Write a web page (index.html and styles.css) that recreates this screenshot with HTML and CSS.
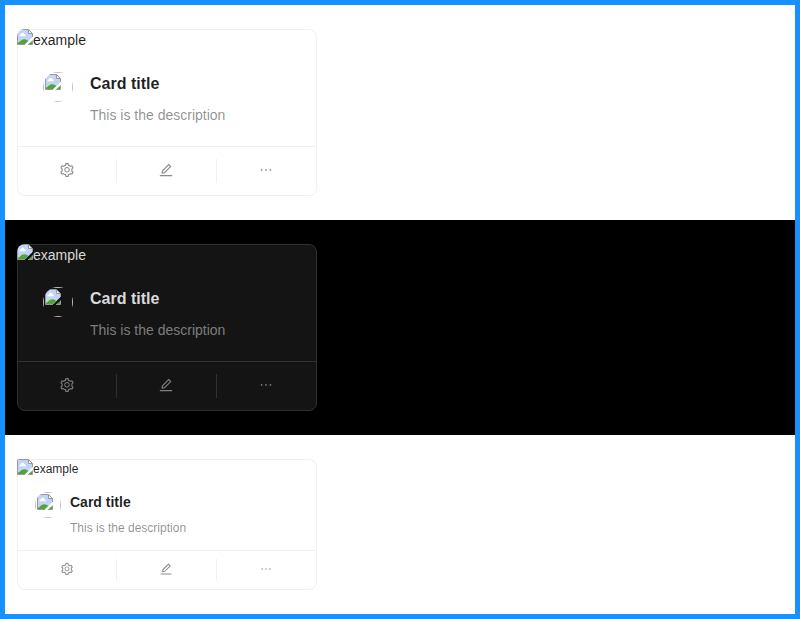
FILE: index.html
```
<!DOCTYPE html>
<html lang="en">
<head>
<meta charset="utf-8">
<title>Card</title>
<link rel="stylesheet" href="styles.css">
</head>
<body>
<svg class="sprite" aria-hidden="true">
  <symbol id="setting" viewBox="0 0 1024 1024"><path d="M924.8 625.7l-65.5-56c3.1-19 4.7-38.4 4.7-57.8s-1.6-38.8-4.7-57.8l65.5-56a32.03 32.03 0 009.3-35.2l-.9-2.6a443.74 443.74 0 00-79.7-137.9l-1.8-2.1a32.12 32.12 0 00-35.1-9.5l-81.3 28.9c-30-24.6-63.5-44-99.7-57.6l-15.7-85a32.05 32.05 0 00-25.8-25.7l-2.7-.5c-52.1-9.4-106.9-9.4-159 0l-2.7.5a32.05 32.05 0 00-25.8 25.7l-15.8 85.4a351.86 351.86 0 00-99 57.4l-81.9-29.1a32 32 0 00-35.1 9.5l-1.8 2.1a446.02 446.02 0 00-79.7 137.9l-.9 2.6c-4.5 12.5-.8 26.5 9.3 35.2l66.3 56.6c-3.1 18.8-4.6 38-4.6 57.1 0 19.2 1.5 38.4 4.6 57.1L99 625.5a32.03 32.03 0 00-9.3 35.2l.9 2.6c18.1 50.4 44.9 96.9 79.7 137.9l1.8 2.1a32.12 32.12 0 0035.1 9.5l81.9-29.1c29.8 24.5 63.1 43.9 99 57.4l15.8 85.4a32.05 32.05 0 0025.8 25.7l2.7.5a449.4 449.4 0 00159 0l2.7-.5a32.05 32.05 0 0025.8-25.7l15.7-85a350 350 0 0099.7-57.6l81.3 28.9a32 32 0 0035.1-9.5l1.8-2.1c34.8-41.1 61.6-87.5 79.7-137.9l.9-2.6c4.5-12.3.8-26.3-9.3-35zM788.3 465.9c2.5 15.1 3.8 30.6 3.8 46.1s-1.3 31-3.8 46.1l-6.6 40.1 74.7 63.9a370.03 370.03 0 01-42.6 73.6L721 702.8l-31.4 25.8c-23.9 19.6-50.5 35-79.3 45.8l-38.1 14.3-17.9 97a377.5 377.5 0 01-85 0l-17.9-97.2-37.8-14.5c-28.5-10.8-55-26.2-78.7-45.7l-31.4-25.9-93.4 33.2c-17-22.9-31.2-47.6-42.6-73.6l75.5-64.5-6.5-40c-2.4-14.9-3.7-30.3-3.7-45.5 0-15.3 1.2-30.6 3.7-45.5l6.5-40-75.5-64.5c11.3-26.1 25.6-50.7 42.6-73.6l93.4 33.2 31.4-25.9c23.7-19.5 50.2-34.9 78.7-45.7l37.9-14.3 17.9-97.2c28.1-3.2 56.8-3.2 85 0l17.9 97 38.1 14.3c28.7 10.8 55.4 26.2 79.3 45.8l31.4 25.8 92.8-32.9c17 22.9 31.2 47.6 42.6 73.6L781.8 426l6.5 39.9zM512 326c-97.2 0-176 78.8-176 176s78.8 176 176 176 176-78.8 176-176-78.8-176-176-176zm79.2 255.2A111.6 111.6 0 01512 614c-29.9 0-58-11.7-79.2-32.8A111.6 111.6 0 01400 502c0-29.9 11.7-58 32.8-79.2C454 401.6 482.1 390 512 390c29.9 0 58 11.6 79.2 32.8A111.6 111.6 0 01624 502c0 29.9-11.7 58-32.8 79.2z"/></symbol>
  <symbol id="edit" viewBox="0 0 1024 1024"><path d="M257.7 752c2 0 4-.2 6-.5L431.9 722c2-.4 3.9-1.3 5.3-2.8l423.9-423.9a9.96 9.96 0 000-14.1L694.9 114.9c-1.9-1.9-4.4-2.9-7.1-2.9s-5.2 1-7.1 2.9L256.8 538.8c-1.5 1.5-2.4 3.3-2.8 5.3l-29.5 168.2a33.5 33.5 0 009.4 29.8c6.6 6.4 14.9 9.9 23.8 9.9zm67.4-174.4L687.8 215l73.3 73.3-362.7 362.6-88.9 15.7 15.6-89zM880 836H144c-17.7 0-32 14.3-32 32v36c0 4.4 3.6 8 8 8h784c4.4 0 8-3.6 8-8v-36c0-17.7-14.3-32-32-32z"/></symbol>
  <symbol id="ellipsis" viewBox="0 0 1024 1024"><path d="M176 511a56 56 0 10112 0 56 56 0 10-112 0zm280 0a56 56 0 10112 0 56 56 0 10-112 0zm280 0a56 56 0 10112 0 56 56 0 10-112 0z"/></symbol>
  <symbol id="picture" viewBox="0 0 16 16">
    <path fill="#c3d5f6" d="M1 1h10.500L15 4.500v4L8.500 15H1z"/>
    <path fill="#fff" d="M2.500 7.200c0-1.300.7-1.900 1.600-2 .3-1.800 2.700-1.900 3.200-.2 1 .1 1.500.9 1.400 2.200z"/>
    <path fill="#52a535" d="M1 15v-1.200c2-.8 3-3.400 6-3.600 1.800-.1 3.200.6 4.200 1.800L8 15z"/>
    <path fill="#f4f4f4" d="M11.500 1L15 4.500h-3.500z"/>
    <path fill="#52a535" d="M11.500 15L15 12v3z"/>
    <path fill="none" stroke="#999" d="M8 15.500H.5V.5h11l4 4V8M11.500.5v4h4M11 15.500h4.500V11.500"/>
  </symbol>
</svg>
<main class="frame">
  <section class="panel">
    <article class="card">
      <div class="cover"><svg class="picture"><use href="#picture"/></svg>example</div>
      <div class="body">
        <div class="avatar"><div class="image"><svg class="picture"><use href="#picture"/></svg></div></div>
        <div class="detail"><div class="title">Card title</div><div class="description">This is the description</div></div>
      </div>
      <ul class="actions">
        <li><svg class="icon"><use href="#setting"/></svg></li>
        <li><svg class="icon"><use href="#edit"/></svg></li>
        <li><svg class="icon"><use href="#ellipsis"/></svg></li>
      </ul>
    </article>
  </section>
  <section class="panel dark">
    <article class="card">
      <div class="cover"><svg class="picture"><use href="#picture"/></svg>example</div>
      <div class="body">
        <div class="avatar"><div class="image"><svg class="picture"><use href="#picture"/></svg></div></div>
        <div class="detail"><div class="title">Card title</div><div class="description">This is the description</div></div>
      </div>
      <ul class="actions">
        <li><svg class="icon"><use href="#setting"/></svg></li>
        <li><svg class="icon"><use href="#edit"/></svg></li>
        <li><svg class="icon"><use href="#ellipsis"/></svg></li>
      </ul>
    </article>
  </section>
  <section class="panel compact">
    <article class="card">
      <div class="cover"><svg class="picture"><use href="#picture"/></svg>example</div>
      <div class="body">
        <div class="avatar"><div class="image"><svg class="picture"><use href="#picture"/></svg></div></div>
        <div class="detail"><div class="title">Card title</div><div class="description">This is the description</div></div>
      </div>
      <ul class="actions">
        <li><svg class="icon"><use href="#setting"/></svg></li>
        <li><svg class="icon"><use href="#edit"/></svg></li>
        <li><svg class="icon"><use href="#ellipsis"/></svg></li>
      </ul>
    </article>
  </section>
</main>
</body>
</html>
```
FILE: styles.css
```
* { box-sizing: border-box; }
body { margin: 0; font-family: "Liberation Sans", Arial, sans-serif; }
.sprite { display: none; }
.frame { height: 619px; border: 5px solid #1890ff; }
.panel {
  --bg: #fff;
  --card: #fff;
  --line: #f0f0f0;
  --text: rgba(0, 0, 0, .88);
  --muted: rgba(0, 0, 0, .45);
  height: 215px;
  padding: 24px 12px;
  background: var(--bg);
  color: var(--text);
  font-size: 14px;
}
.dark {
  --bg: #000;
  --card: #141414;
  --line: #303030;
  --text: rgba(255, 255, 255, .85);
  --muted: rgba(255, 255, 255, .45);
}
.card {
  display: flex;
  flex-direction: column;
  width: 300px;
  height: 167px;
  border: 1px solid var(--line);
  border-radius: 8px;
  background: var(--card);
}
.cover {
  display: flex;
  height: 22px;
  margin: -1px -1px -4px;
  line-height: 22px;
}
.cover .picture { border-top-left-radius: 8px; }
.picture { display: block; flex: none; width: 16px; height: 16px; }
.body { display: flex; flex: 1; gap: 16px; padding: 24px 24px 0; }
.avatar { width: 32px; height: 32px; padding: 1px; }
.image {
  width: 30px;
  height: 30px;
  padding: 2px;
  border-radius: 50%;
  background: linear-gradient(silver, silver) top / 100% 1px no-repeat,
    linear-gradient(silver, silver) bottom / 100% 1px no-repeat,
    linear-gradient(silver, silver) left / 1px 100% no-repeat,
    linear-gradient(silver, silver) right / 1px 100% no-repeat;
  overflow: hidden;
}
.detail { padding-top: 1px; }
.title { margin-bottom: 8px; font-size: 16px; font-weight: 600; line-height: 24px; }
.description { color: var(--muted); line-height: 22px; }
.actions {
  display: grid;
  grid-template-columns: 99px 100px 99px;
  margin: 0;
  padding: 0;
  border-top: 1px solid var(--line);
  list-style: none;
  color: var(--muted);
}
.actions li {
  display: flex;
  align-items: center;
  justify-content: center;
  height: 24px;
  margin: 12px 0;
}
.actions li:not(:last-child) { border-right: 1px solid var(--line); }
.icon { width: 16px; height: 16px; margin-top: -2px; fill: currentColor; }
.actions li:not(:first-child) .icon { margin-left: -1px; }
.compact { height: 179px; font-size: 12px; }
.compact .card { height: 131px; }
.compact .cover { height: 20px; line-height: 20px; }
.compact .cover .picture { border-top-left-radius: 2px; }
.compact .body { gap: 8px; padding: 16px 16px 0; }
.compact .avatar { width: 28px; height: 28px; }
.compact .image { width: 26px; height: 26px; }
.compact .detail { padding-top: 0; }
.compact .title { margin-bottom: 5px; font-size: 14px; line-height: 22px; }
.compact .description { line-height: 20px; }
.compact .actions li { height: 22px; margin: 8px 0; }
.compact .icon { width: 14px; height: 14px; }
```
